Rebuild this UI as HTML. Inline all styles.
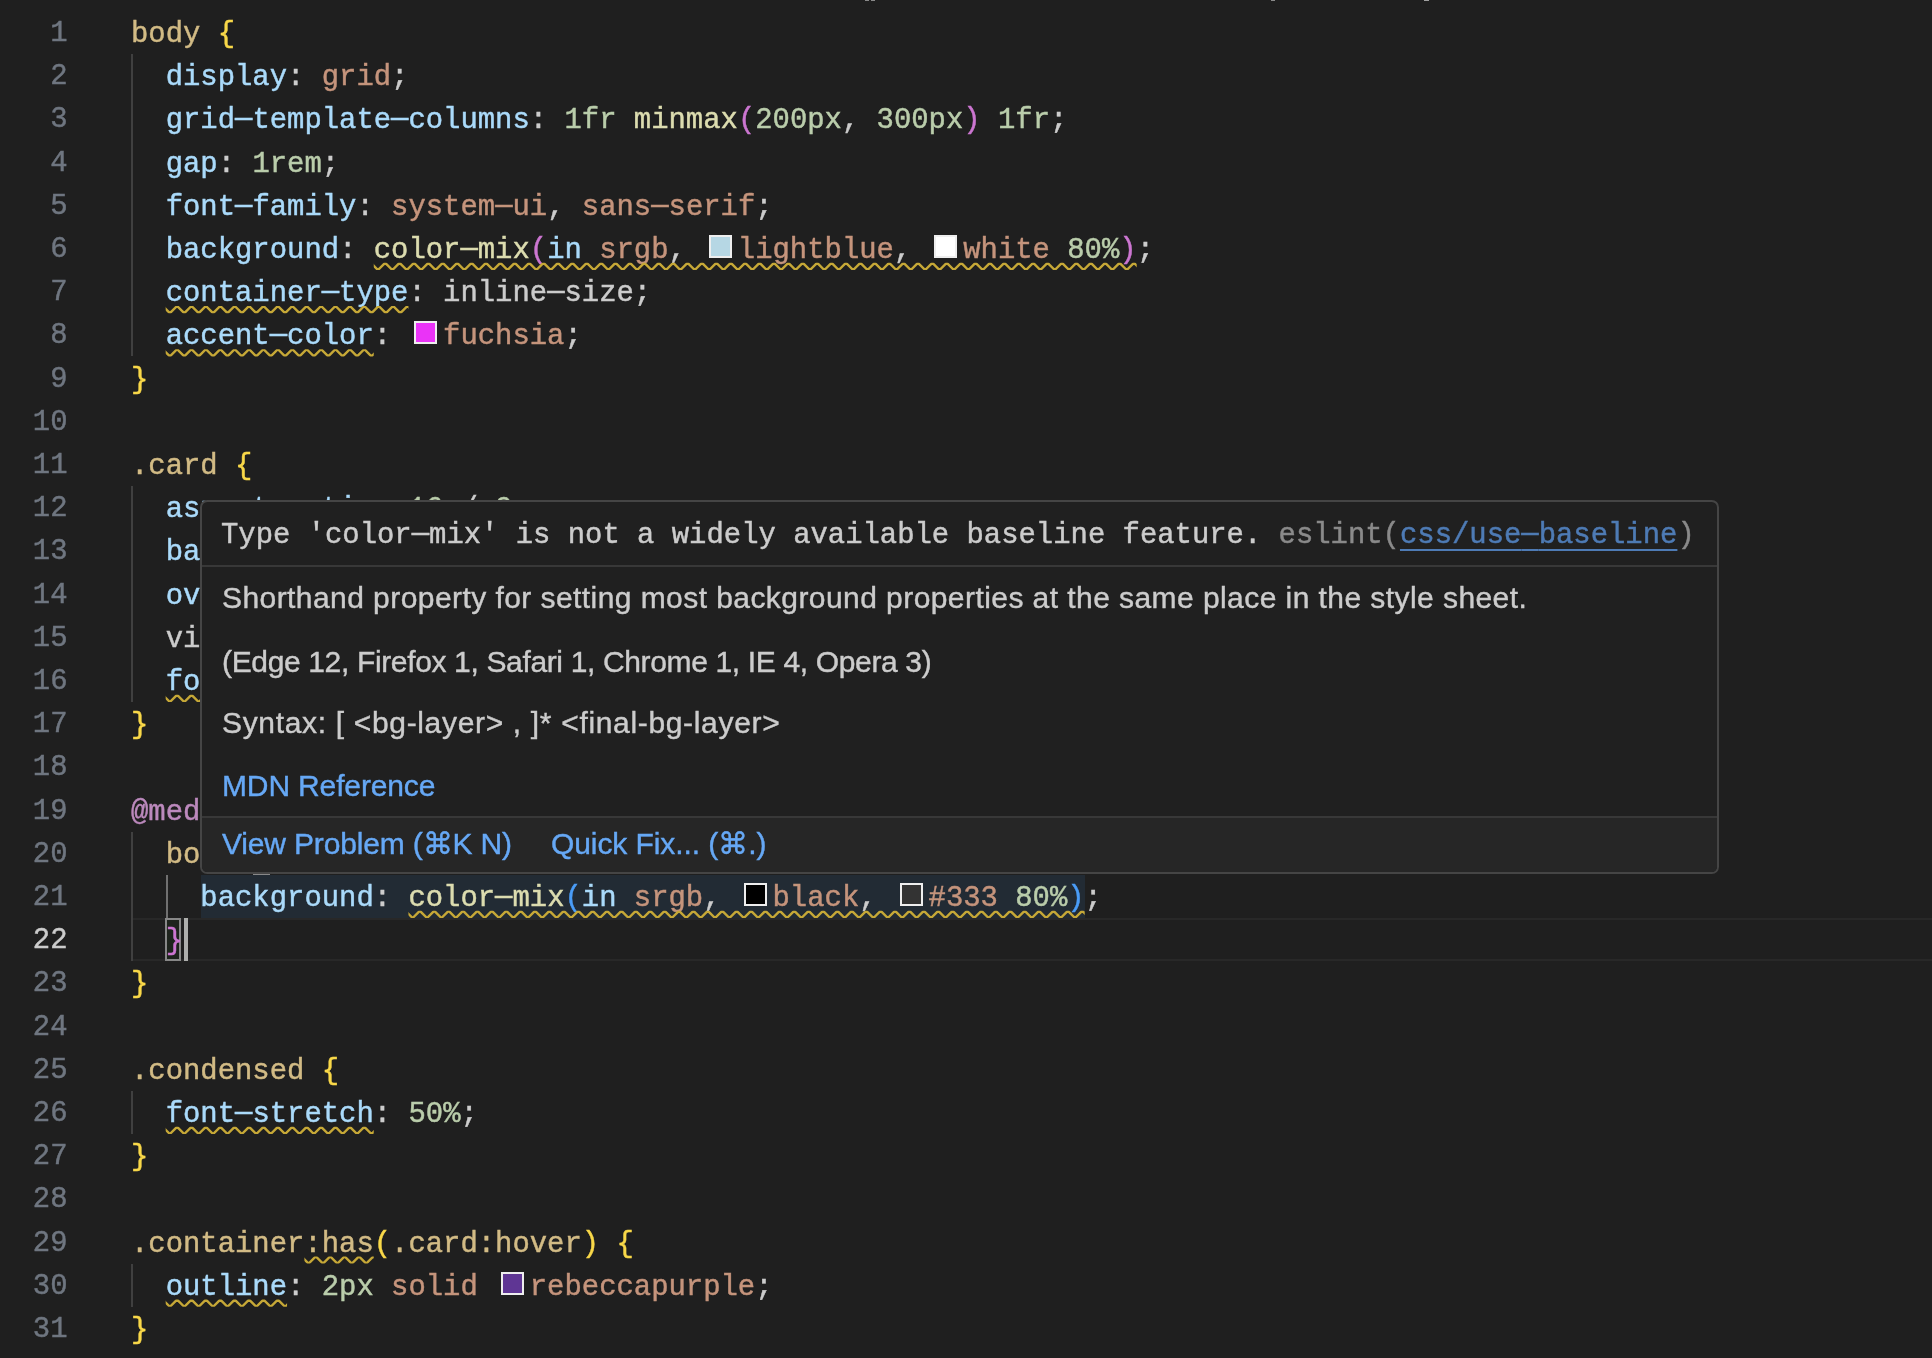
<!DOCTYPE html>
<html><head><meta charset="utf-8"><style>
html,body{margin:0;padding:0}
body{width:1932px;height:1358px;background:#1f1f1f;overflow:hidden;position:relative;font-family:"Liberation Mono",monospace;}
.ln{position:absolute;left:0;width:67.5px;text-align:right;color:#6f7680;font-size:28.90px;line-height:43.20px;height:43.20px;white-space:pre;-webkit-text-stroke:0.45px currentColor}
.l{position:absolute;left:131.00px;font-size:28.90px;line-height:43.20px;height:43.20px;white-space:pre;color:#cccccc;-webkit-text-stroke:0.45px currentColor}
.s{color:#d2bb85}.p{color:#aadafa}.v{color:#c5947c}.n{color:#bacdab}.f{color:#dcdcaf}.d{color:#cccccc}
.y{color:#f9d849}.m{color:#cc76d1}.b{color:#4a9df8}.k{color:#bc89bd}
.box{display:inline-block;box-sizing:border-box;width:0.8em;height:0.8em;border:0.1em solid #eee;margin:0 0.2em;vertical-align:baseline}
.g{position:absolute;width:2.4px;background:#404040}
.hy{position:relative;top:-1px}
</style></head><body><div id="root" style="position:absolute;left:0;top:0;width:1932px;height:1358px;will-change:transform">
<div style="position:absolute;left:131px;top:918.00px;width:1801px;height:43.20px;box-sizing:border-box;border-top:2.4px solid #282828;border-bottom:2.4px solid #282828"></div><div style="position:absolute;left:200.7px;top:874.80px;width:884.5px;height:43.20px;background:#222b34"></div><div style="position:absolute;left:165px;top:918.00px;width:16px;height:43.20px;box-sizing:border-box;border:2.4px solid #888;background:#1d231c"></div><div style="position:absolute;left:253px;top:831.60px;width:17px;height:43.20px;box-sizing:border-box;border:2.4px solid #888;background:#1d231c"></div><div class="g" style="left:131.00px;top:54.00px;height:302.40px;background:#404040"></div><div class="g" style="left:131.00px;top:486.00px;height:216.00px;background:#404040"></div><div class="g" style="left:131.00px;top:831.60px;height:129.60px;background:#404040"></div><div class="g" style="left:166.00px;top:874.80px;height:43.20px;background:#707070"></div><div class="g" style="left:131.00px;top:1090.80px;height:43.20px;background:#404040"></div><div class="g" style="left:131.00px;top:1263.60px;height:43.20px;background:#404040"></div><div class="ln" style="top:12.00px;color:#6f7680">1</div><div class="ln" style="top:55.20px;color:#6f7680">2</div><div class="ln" style="top:98.40px;color:#6f7680">3</div><div class="ln" style="top:141.60px;color:#6f7680">4</div><div class="ln" style="top:184.80px;color:#6f7680">5</div><div class="ln" style="top:228.00px;color:#6f7680">6</div><div class="ln" style="top:271.20px;color:#6f7680">7</div><div class="ln" style="top:314.40px;color:#6f7680">8</div><div class="ln" style="top:357.60px;color:#6f7680">9</div><div class="ln" style="top:400.80px;color:#6f7680">10</div><div class="ln" style="top:444.00px;color:#6f7680">11</div><div class="ln" style="top:487.20px;color:#6f7680">12</div><div class="ln" style="top:530.40px;color:#6f7680">13</div><div class="ln" style="top:573.60px;color:#6f7680">14</div><div class="ln" style="top:616.80px;color:#6f7680">15</div><div class="ln" style="top:660.00px;color:#6f7680">16</div><div class="ln" style="top:703.20px;color:#6f7680">17</div><div class="ln" style="top:746.40px;color:#6f7680">18</div><div class="ln" style="top:789.60px;color:#6f7680">19</div><div class="ln" style="top:832.80px;color:#6f7680">20</div><div class="ln" style="top:876.00px;color:#6f7680">21</div><div class="ln" style="top:919.20px;color:#cccccc">22</div><div class="ln" style="top:962.40px;color:#6f7680">23</div><div class="ln" style="top:1005.60px;color:#6f7680">24</div><div class="ln" style="top:1048.80px;color:#6f7680">25</div><div class="ln" style="top:1092.00px;color:#6f7680">26</div><div class="ln" style="top:1135.20px;color:#6f7680">27</div><div class="ln" style="top:1178.40px;color:#6f7680">28</div><div class="ln" style="top:1221.60px;color:#6f7680">29</div><div class="ln" style="top:1264.80px;color:#6f7680">30</div><div class="ln" style="top:1308.00px;color:#6f7680">31</div><div class="l" style="top:13.00px"><span class="s">body</span><span class="d"> </span><span class="y">{</span></div><div class="l" style="top:56.20px"><span class="d">  </span><span class="p">display</span><span class="d">: </span><span class="v">grid</span><span class="d">;</span></div><div class="l" style="top:99.40px"><span class="d">  </span><span class="p">grid<span class="hy">—</span>template<span class="hy">—</span>columns</span><span class="d">: </span><span class="n">1fr</span><span class="d"> </span><span class="f">minmax</span><span class="m">(</span><span class="n">200px</span><span class="d">, </span><span class="n">300px</span><span class="m">)</span><span class="d"> </span><span class="n">1fr</span><span class="d">;</span></div><div class="l" style="top:142.60px"><span class="d">  </span><span class="p">gap</span><span class="d">: </span><span class="n">1rem</span><span class="d">;</span></div><div class="l" style="top:185.80px"><span class="d">  </span><span class="p">font<span class="hy">—</span>family</span><span class="d">: </span><span class="v">system<span class="hy">—</span>ui</span><span class="d">, </span><span class="v">sans<span class="hy">—</span>serif</span><span class="d">;</span></div><div class="l" style="top:229.00px"><span class="d">  </span><span class="p">background</span><span class="d">: </span><span class="f">color<span class="hy">—</span>mix</span><span class="m">(</span><span class="p">in</span><span class="d"> </span><span class="v">srgb</span><span class="d">, </span><span class="box" style="background:#b6d7e4"></span><span class="v">lightblue</span><span class="d">, </span><span class="box" style="background:#ffffff"></span><span class="v">white</span><span class="d"> </span><span class="n">80%</span><span class="m">)</span><span class="d">;</span></div><div class="l" style="top:272.20px"><span class="d">  </span><span class="p">container<span class="hy">—</span>type</span><span class="d">: inline<span class="hy">—</span>size;</span></div><div class="l" style="top:315.40px"><span class="d">  </span><span class="p">accent<span class="hy">—</span>color</span><span class="d">: </span><span class="box" style="background:#ea33f7"></span><span class="v">fuchsia</span><span class="d">;</span></div><div class="l" style="top:358.60px"><span class="y">}</span></div><div class="l" style="top:445.00px"><span class="s">.card</span><span class="d"> </span><span class="y">{</span></div><div class="l" style="top:488.20px"><span class="d">  </span><span class="p">aspect<span class="hy">—</span>ratio</span><span class="d">: </span><span class="n">16</span><span class="d"> / </span><span class="n">9</span><span class="d">;</span></div><div class="l" style="top:531.40px"><span class="d">  </span><span class="p">background</span><span class="d">: </span><span class="v">white</span><span class="d">;</span></div><div class="l" style="top:574.60px"><span class="d">  </span><span class="p">overflow</span><span class="d">: </span><span class="v">hidden</span><span class="d">;</span></div><div class="l" style="top:617.80px"><span class="d">  view<span class="hy">—</span>transition<span class="hy">—</span>name: card;</span></div><div class="l" style="top:661.00px"><span class="d">  </span><span class="p">font<span class="hy">—</span>stretch</span><span class="d">: </span><span class="v">condensed</span><span class="d">;</span></div><div class="l" style="top:704.20px"><span class="y">}</span></div><div class="l" style="top:790.60px"><span class="k">@media</span><span class="d"> </span><span class="y">(</span><span class="p">prefers<span class="hy">—</span>color<span class="hy">—</span>scheme</span><span class="d">: </span><span class="v">dark</span><span class="y">)</span><span class="d"> </span><span class="y">{</span></div><div class="l" style="top:833.80px"><span class="d">  </span><span class="s">body</span><span class="d"> </span><span class="m">{</span></div><div class="l" style="top:877.00px"><span class="d">    </span><span class="p">background</span><span class="d">: </span><span class="f">color<span class="hy">—</span>mix</span><span class="b">(</span><span class="p">in</span><span class="d"> </span><span class="v">srgb</span><span class="d">, </span><span class="box" style="background:#000000"></span><span class="v">black</span><span class="d">, </span><span class="box" style="background:#333333"></span><span class="v">#333</span><span class="d"> </span><span class="n">80%</span><span class="b">)</span><span class="d">;</span></div><div class="l" style="top:920.20px"><span class="d">  </span><span class="m">}</span></div><div class="l" style="top:963.40px"><span class="y">}</span></div><div class="l" style="top:1049.80px"><span class="s">.condensed</span><span class="d"> </span><span class="y">{</span></div><div class="l" style="top:1093.00px"><span class="d">  </span><span class="p">font<span class="hy">—</span>stretch</span><span class="d">: </span><span class="n">50%</span><span class="d">;</span></div><div class="l" style="top:1136.20px"><span class="y">}</span></div><div class="l" style="top:1222.60px"><span class="s">.container:has</span><span class="y">(</span><span class="s">.card:hover</span><span class="y">)</span><span class="d"> </span><span class="y">{</span></div><div class="l" style="top:1265.80px"><span class="d">  </span><span class="p">outline</span><span class="d">: </span><span class="n">2px</span><span class="d"> </span><span class="v">solid</span><span class="d"> </span><span class="box" style="background:#5f3694"></span><span class="v">rebeccapurple</span><span class="d">;</span></div><div class="l" style="top:1309.00px"><span class="y">}</span></div><svg style="position:absolute;left:0;top:0" width="1932" height="1358"><svg x="373.76" y="262.80" width="762.96" height="7.2"><polyline points="-10.20,7.20 -3.00,0.00 4.20,7.20 11.40,0.00 18.60,7.20 25.80,0.00 33.00,7.20 40.20,0.00 47.40,7.20 54.60,0.00 61.80,7.20 69.00,0.00 76.20,7.20 83.40,0.00 90.60,7.20 97.80,0.00 105.00,7.20 112.20,0.00 119.40,7.20 126.60,0.00 133.80,7.20 141.00,0.00 148.20,7.20 155.40,0.00 162.60,7.20 169.80,0.00 177.00,7.20 184.20,0.00 191.40,7.20 198.60,0.00 205.80,7.20 213.00,0.00 220.20,7.20 227.40,0.00 234.60,7.20 241.80,0.00 249.00,7.20 256.20,0.00 263.40,7.20 270.60,0.00 277.80,7.20 285.00,0.00 292.20,7.20 299.40,0.00 306.60,7.20 313.80,0.00 321.00,7.20 328.20,0.00 335.40,7.20 342.60,0.00 349.80,7.20 357.00,0.00 364.20,7.20 371.40,0.00 378.60,7.20 385.80,0.00 393.00,7.20 400.20,0.00 407.40,7.20 414.60,0.00 421.80,7.20 429.00,0.00 436.20,7.20 443.40,0.00 450.60,7.20 457.80,0.00 465.00,7.20 472.20,0.00 479.40,7.20 486.60,0.00 493.80,7.20 501.00,0.00 508.20,7.20 515.40,0.00 522.60,7.20 529.80,0.00 537.00,7.20 544.20,0.00 551.40,7.20 558.60,0.00 565.80,7.20 573.00,0.00 580.20,7.20 587.40,0.00 594.60,7.20 601.80,0.00 609.00,7.20 616.20,0.00 623.40,7.20 630.60,0.00 637.80,7.20 645.00,0.00 652.20,7.20 659.40,0.00 666.60,7.20 673.80,0.00 681.00,7.20 688.20,0.00 695.40,7.20 702.60,0.00 709.80,7.20 717.00,0.00 724.20,7.20 731.40,0.00 738.60,7.20 745.80,0.00 753.00,7.20 760.20,0.00 767.40,7.20 774.60,0.00" fill="none" stroke="#c6a837" stroke-width="2.4" stroke-linejoin="miter" stroke-miterlimit="10"/></svg><svg x="165.68" y="306.00" width="242.76" height="7.2"><polyline points="-10.20,7.20 -3.00,0.00 4.20,7.20 11.40,0.00 18.60,7.20 25.80,0.00 33.00,7.20 40.20,0.00 47.40,7.20 54.60,0.00 61.80,7.20 69.00,0.00 76.20,7.20 83.40,0.00 90.60,7.20 97.80,0.00 105.00,7.20 112.20,0.00 119.40,7.20 126.60,0.00 133.80,7.20 141.00,0.00 148.20,7.20 155.40,0.00 162.60,7.20 169.80,0.00 177.00,7.20 184.20,0.00 191.40,7.20 198.60,0.00 205.80,7.20 213.00,0.00 220.20,7.20 227.40,0.00 234.60,7.20 241.80,0.00 249.00,7.20 256.20,0.00" fill="none" stroke="#c6a837" stroke-width="2.4" stroke-linejoin="miter" stroke-miterlimit="10"/></svg><svg x="165.68" y="349.20" width="208.08" height="7.2"><polyline points="-10.20,7.20 -3.00,0.00 4.20,7.20 11.40,0.00 18.60,7.20 25.80,0.00 33.00,7.20 40.20,0.00 47.40,7.20 54.60,0.00 61.80,7.20 69.00,0.00 76.20,7.20 83.40,0.00 90.60,7.20 97.80,0.00 105.00,7.20 112.20,0.00 119.40,7.20 126.60,0.00 133.80,7.20 141.00,0.00 148.20,7.20 155.40,0.00 162.60,7.20 169.80,0.00 177.00,7.20 184.20,0.00 191.40,7.20 198.60,0.00 205.80,7.20 213.00,0.00 220.20,7.20 227.40,0.00" fill="none" stroke="#c6a837" stroke-width="2.4" stroke-linejoin="miter" stroke-miterlimit="10"/></svg><svg x="165.68" y="694.80" width="208.08" height="7.2"><polyline points="-10.20,7.20 -3.00,0.00 4.20,7.20 11.40,0.00 18.60,7.20 25.80,0.00 33.00,7.20 40.20,0.00 47.40,7.20 54.60,0.00 61.80,7.20 69.00,0.00 76.20,7.20 83.40,0.00 90.60,7.20 97.80,0.00 105.00,7.20 112.20,0.00 119.40,7.20 126.60,0.00 133.80,7.20 141.00,0.00 148.20,7.20 155.40,0.00 162.60,7.20 169.80,0.00 177.00,7.20 184.20,0.00 191.40,7.20 198.60,0.00 205.80,7.20 213.00,0.00 220.20,7.20 227.40,0.00" fill="none" stroke="#c6a837" stroke-width="2.4" stroke-linejoin="miter" stroke-miterlimit="10"/></svg><svg x="408.44" y="910.80" width="676.26" height="7.2"><polyline points="-10.20,7.20 -3.00,0.00 4.20,7.20 11.40,0.00 18.60,7.20 25.80,0.00 33.00,7.20 40.20,0.00 47.40,7.20 54.60,0.00 61.80,7.20 69.00,0.00 76.20,7.20 83.40,0.00 90.60,7.20 97.80,0.00 105.00,7.20 112.20,0.00 119.40,7.20 126.60,0.00 133.80,7.20 141.00,0.00 148.20,7.20 155.40,0.00 162.60,7.20 169.80,0.00 177.00,7.20 184.20,0.00 191.40,7.20 198.60,0.00 205.80,7.20 213.00,0.00 220.20,7.20 227.40,0.00 234.60,7.20 241.80,0.00 249.00,7.20 256.20,0.00 263.40,7.20 270.60,0.00 277.80,7.20 285.00,0.00 292.20,7.20 299.40,0.00 306.60,7.20 313.80,0.00 321.00,7.20 328.20,0.00 335.40,7.20 342.60,0.00 349.80,7.20 357.00,0.00 364.20,7.20 371.40,0.00 378.60,7.20 385.80,0.00 393.00,7.20 400.20,0.00 407.40,7.20 414.60,0.00 421.80,7.20 429.00,0.00 436.20,7.20 443.40,0.00 450.60,7.20 457.80,0.00 465.00,7.20 472.20,0.00 479.40,7.20 486.60,0.00 493.80,7.20 501.00,0.00 508.20,7.20 515.40,0.00 522.60,7.20 529.80,0.00 537.00,7.20 544.20,0.00 551.40,7.20 558.60,0.00 565.80,7.20 573.00,0.00 580.20,7.20 587.40,0.00 594.60,7.20 601.80,0.00 609.00,7.20 616.20,0.00 623.40,7.20 630.60,0.00 637.80,7.20 645.00,0.00 652.20,7.20 659.40,0.00 666.60,7.20 673.80,0.00 681.00,7.20 688.20,0.00" fill="none" stroke="#c6a837" stroke-width="2.4" stroke-linejoin="miter" stroke-miterlimit="10"/></svg><svg x="165.68" y="1126.80" width="208.08" height="7.2"><polyline points="-10.20,7.20 -3.00,0.00 4.20,7.20 11.40,0.00 18.60,7.20 25.80,0.00 33.00,7.20 40.20,0.00 47.40,7.20 54.60,0.00 61.80,7.20 69.00,0.00 76.20,7.20 83.40,0.00 90.60,7.20 97.80,0.00 105.00,7.20 112.20,0.00 119.40,7.20 126.60,0.00 133.80,7.20 141.00,0.00 148.20,7.20 155.40,0.00 162.60,7.20 169.80,0.00 177.00,7.20 184.20,0.00 191.40,7.20 198.60,0.00 205.80,7.20 213.00,0.00 220.20,7.20 227.40,0.00" fill="none" stroke="#c6a837" stroke-width="2.4" stroke-linejoin="miter" stroke-miterlimit="10"/></svg><svg x="304.40" y="1256.40" width="69.36" height="7.2"><polyline points="-10.20,7.20 -3.00,0.00 4.20,7.20 11.40,0.00 18.60,7.20 25.80,0.00 33.00,7.20 40.20,0.00 47.40,7.20 54.60,0.00 61.80,7.20 69.00,0.00 76.20,7.20 83.40,0.00" fill="none" stroke="#c6a837" stroke-width="2.4" stroke-linejoin="miter" stroke-miterlimit="10"/></svg><svg x="165.68" y="1299.60" width="121.38" height="7.2"><polyline points="-10.20,7.20 -3.00,0.00 4.20,7.20 11.40,0.00 18.60,7.20 25.80,0.00 33.00,7.20 40.20,0.00 47.40,7.20 54.60,0.00 61.80,7.20 69.00,0.00 76.20,7.20 83.40,0.00 90.60,7.20 97.80,0.00 105.00,7.20 112.20,0.00 119.40,7.20 126.60,0.00 133.80,7.20 141.00,0.00" fill="none" stroke="#c6a837" stroke-width="2.4" stroke-linejoin="miter" stroke-miterlimit="10"/></svg></svg><div style="position:absolute;left:865.0px;top:0;width:3.5px;height:1.2px;background:#8a8a8a"></div><div style="position:absolute;left:871.0px;top:0;width:4.0px;height:1.2px;background:#8a8a8a"></div><div style="position:absolute;left:1271.0px;top:0;width:3.5px;height:1.2px;background:#8a8a8a"></div><div style="position:absolute;left:1424.0px;top:0;width:4.5px;height:1.2px;background:#a0a0a0"></div><div style="position:absolute;left:183.5px;top:918.00px;width:4.6px;height:43.20px;background:#aeafad"></div><div style="position:absolute;left:200.00px;top:500.00px;width:1519.00px;height:374.00px;box-sizing:border-box;border:2.4px solid #454545;border-radius:7.2px;background:#202020;overflow:hidden"><div style="position:absolute;left:0;right:0;top:313.60px;bottom:0;background:#262626"></div><div style="position:absolute;left:0;right:0;top:62.60px;height:2.2px;background:#383838"></div><div style="position:absolute;left:0;right:0;top:313.80px;height:2px;background:#383838"></div></div><div style="position:absolute;left:221.00px;top:513.80px;font-family:'Liberation Mono',monospace;font-size:28.9px;line-height:43.2px;white-space:pre;color:#cccccc;-webkit-text-stroke:0.45px currentColor">Type 'color<span class="hy">—</span>mix' is not a widely available baseline feature. <span style="color:#8a8a8a">eslint(</span><span style="color:#4E7BB5;text-decoration:underline;text-underline-offset:6px;text-decoration-thickness:2.4px">css/use<span class="hy">—</span>baseline</span><span style="color:#8a8a8a">)</span></div><div class="sl" style="position:absolute;left:222.00px;top:575.90px;font-family:'Liberation Sans',sans-serif;font-size:30px;line-height:43.2px;white-space:pre;letter-spacing:0.434px;color:#cccccc;-webkit-text-stroke:0.4px currentColor">Shorthand property for setting most background properties at the same place in the style sheet.</div><div class="sl" style="position:absolute;left:222.00px;top:639.70px;font-family:'Liberation Sans',sans-serif;font-size:30px;line-height:43.2px;white-space:pre;letter-spacing:-0.352px;color:#cccccc;-webkit-text-stroke:0.4px currentColor">(Edge 12, Firefox 1, Safari 1, Chrome 1, IE 4, Opera 3)</div><div class="sl" style="position:absolute;left:222.00px;top:701.30px;font-family:'Liberation Sans',sans-serif;font-size:30px;line-height:43.2px;white-space:pre;letter-spacing:0.668px;color:#cccccc;-webkit-text-stroke:0.4px currentColor">Syntax: [ &lt;bg-layer&gt; , ]* &lt;final-bg-layer&gt;</div><div class="sl" style="position:absolute;left:222.00px;top:763.60px;font-family:'Liberation Sans',sans-serif;font-size:30px;line-height:43.2px;white-space:pre;letter-spacing:-0.140px;color:#66a8f5;-webkit-text-stroke:0.4px currentColor">MDN Reference</div><div class="sl" style="position:absolute;left:222.00px;top:822.20px;font-family:'Liberation Sans',sans-serif;font-size:30px;line-height:43.2px;white-space:pre;letter-spacing:-0.160px;color:#66a8f5;-webkit-text-stroke:0.4px currentColor">View Problem (⌘K N)</div><div class="sl" style="position:absolute;left:551.00px;top:822.20px;font-family:'Liberation Sans',sans-serif;font-size:30px;line-height:43.2px;white-space:pre;letter-spacing:-0.080px;color:#66a8f5;-webkit-text-stroke:0.4px currentColor">Quick Fix... (⌘.)</div></div></body></html>
